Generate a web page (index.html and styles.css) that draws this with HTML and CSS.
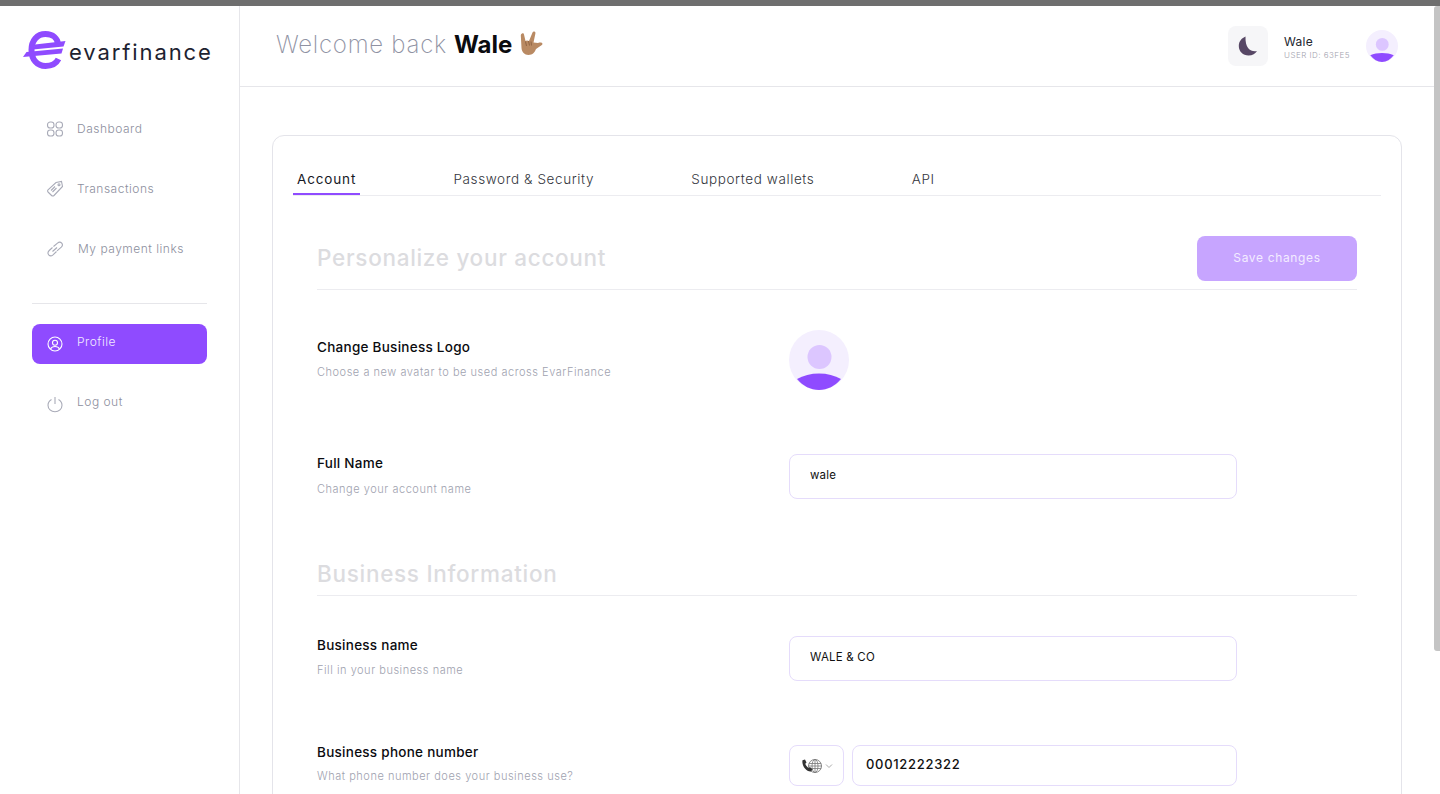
FILE: index.html
```html
<!DOCTYPE html>
<html lang="en">
<head>
    <meta charset="UTF-8">
    <meta name="viewport" content="width=device-width, initial-scale=1.0">
    <title>Profile - EvarFinance</title>
    <link rel="stylesheet" href="styles.css">
</head>
<body>

    <div class="top-strip"></div>
    <div class="scrollbar"></div>

    <div class="app">
        <aside class="sidebar">
            <div class="logo">
                <svg class="logo-mark" width="44" height="38" viewBox="0 0 44 38">
                    <path d="M35.500 28C33 33 28 35 22.500 35C14 35 8.500 28.500 8.500 19C8.500 9.500 14 3 22.500 3C30 3 34.500 7.500 35 13" fill="none" stroke="#8f4bff" stroke-width="6"/>
                    <path d="M12 13.500L42.500 10L40.500 15.500L10 18.500Z" fill="#8f4bff"/>
                    <path d="M3.500 21L40 17.500L38.500 22.500L0 26Z" fill="#8f4bff"/>
                </svg>
                <span class="logo-text">evarfinance</span>
            </div>

            <nav class="nav">
                <a class="nav-item">
                    <svg class="nav-icon" width="18" height="18" viewBox="0 0 18 18" fill="none" stroke="#a9abb8" stroke-width="1.100">
                        <rect x="1.500" y="2" width="6.500" height="6" rx="2.800"/>
                        <rect x="10" y="2" width="6.500" height="6" rx="2.800"/>
                        <rect x="1.500" y="10" width="6.500" height="6" rx="2.800"/>
                        <rect x="10" y="10" width="6.500" height="6" rx="2.800"/>
                    </svg>
                    <span>Dashboard</span>
                </a>
                <a class="nav-item">
                    <svg class="nav-icon" width="18" height="18" viewBox="0 0 18 18" fill="none" stroke="#a9abb8" stroke-width="1.100">
                        <path d="M10 2.500L15.500 1.500L16.500 6.500L8 15.500C7.300 16.200 6.300 16.200 5.600 15.500L2 12C1.400 11.300 1.400 10.400 2 9.800Z"/>
                        <circle cx="13" cy="4.700" r="1"/>
                        <path d="M5 10.500L9 6.500M6.500 12L10.500 8"/>
                    </svg>
                    <span>Transactions</span>
                </a>
                <a class="nav-item nav-links">
                    <svg class="nav-icon" width="18" height="18" viewBox="0 0 18 18" fill="none" stroke="#a9abb8" stroke-width="1.100">
                        <path d="M7.500 6.500L11.500 3.200C12.900 2 14.700 2.100 15.700 3.200C16.700 4.400 16.500 6 15.300 7.100L11 10.800"/>
                        <path d="M6.500 11.500L11 7.500"/>
                        <path d="M6.500 7.500L3.200 10.500C1.900 11.800 1.700 13.600 2.700 14.800C3.800 16 5.600 16 7 14.800L10.500 11.500"/>
                    </svg>
                    <span>My payment links</span>
                </a>
            </nav>

            <div class="nav-divider"></div>

            <nav class="nav nav-lower">
                <a class="nav-item active">
                    <svg class="nav-icon" width="18" height="18" viewBox="0 0 18 18" fill="none" stroke="#fff" stroke-width="1.100">
                        <circle cx="9" cy="9" r="7"/>
                        <circle cx="9" cy="7.800" r="2.500"/>
                        <path d="M4.500 14C5.500 12 7 11.500 9 11.500C11 11.500 12.500 12 13.500 14"/>
                    </svg>
                    <span>Profile</span>
                </a>
                <a class="nav-item">
                    <svg class="nav-icon" width="18" height="18" viewBox="0 0 18 18" fill="none" stroke="#a9abb8" stroke-width="1.100">
                        <path d="M5.500 4.500C3.400 5.700 2 7.800 2 10.200C2 13.900 5.100 16.800 9 16.800C12.900 16.800 16 13.900 16 10.200C16 7.800 14.600 5.700 12.500 4.500"/>
                        <path d="M9 2V9"/>
                    </svg>
                    <span>Log out</span>
                </a>
            </nav>
        </aside>

        <main class="main">
            <header class="header">
                <h1 class="welcome">
                    <span>Welcome back</span>
                    <strong>Wale</strong>
                    <svg class="wave" width="28" height="28" viewBox="0 0 28 28">
                        <path d="M6 3.500C7 3 7.800 3.500 8 4.500L9.500 11L11 10.500L13 11L16.500 2.500C17 1.500 18 1.300 18.800 1.800C19.500 2.200 19.600 3 19.300 4L17.500 12.500L22 13C23.500 12.500 25 12.300 26 13C26.800 13.700 26.500 14.800 25.500 15.300L20 19C19 22 16.500 25 12.500 25C8.500 25 5.800 22 5.500 18L4.800 5.200C4.800 4.400 5.200 3.800 6 3.500Z" fill="#b98a63"/>
                        <path d="M9.500 11.500L10.500 16M12.500 11L13.500 15.500M15 11.500L15.500 15.500" stroke="#8f6444" stroke-width="1" fill="none"/>
                    </svg>
                </h1>
                <div class="header-right">
                    <button class="theme-btn">
                        <svg width="20" height="20" viewBox="0 0 20 20">
                            <path d="M7.500 0.500C4 2 0.800 5 0.800 10C0.800 15.500 5 19.500 10.500 19.500C14.500 19.500 17.500 17.500 19 15C13 16 7 13 7.500 0.500Z" fill="#574765"/>
                        </svg>
                    </button>
                    <div class="user-info">
                        <div class="user-name">Wale</div>
                        <div class="user-id">USER ID: 63FE5</div>
                    </div>
                    <svg class="avatar" width="32" height="32" viewBox="0 0 60 60">
                        <circle cx="30" cy="30" r="30" fill="#f4effe"/>
                        <circle cx="30.500" cy="27" r="12" fill="#dcc6ff"/>
                        <path d="M8 47.500C20 41.500 40 41.500 52 47.500C46 55.500 38.500 60 30 60C21.500 60 14 55.500 8 47.500Z" fill="#8f4bff"/>
                    </svg>
                </div>
            </header>

            <div class="content">
                <section class="card">
                    <div class="tabs">
                        <a class="tab active">Account</a>
                        <a class="tab">Password &amp; Security</a>
                        <a class="tab">Supported wallets</a>
                        <a class="tab">API</a>
                    </div>

                    <div class="form-area">
                        <div class="section-head">
                            <h2>Personalize your account</h2>
                            <button class="save-btn">Save changes</button>
                        </div>

                        <div class="row row-logo">
                            <div class="row-label">
                                <h3>Change Business Logo</h3>
                                <p>Choose a new avatar to be used across EvarFinance</p>
                            </div>
                            <svg class="big-avatar" width="60" height="60" viewBox="0 0 60 60">
                                <circle cx="30" cy="30" r="30" fill="#f4effe"/>
                                <circle cx="30.500" cy="27" r="12" fill="#dcc6ff"/>
                                <path d="M8 49C20 41.500 40 41.500 52 49C46 56 38.500 60 30 60C21.500 60 14 56 8 49Z" fill="#8f4bff"/>
                            </svg>
                        </div>

                        <div class="row row-name">
                            <div class="row-label">
                                <h3>Full Name</h3>
                                <p>Change your account name</p>
                            </div>
                            <input class="text-input" type="text" value="wale">
                        </div>

                        <div class="section-head section-business">
                            <h2>Business Information</h2>
                        </div>

                        <div class="row row-business">
                            <div class="row-label">
                                <h3>Business name</h3>
                                <p>Fill in your business name</p>
                            </div>
                            <input class="text-input" type="text" value="WALE &amp; CO">
                        </div>

                        <div class="row row-phone">
                            <div class="row-label">
                                <h3>Business phone number</h3>
                                <p>What phone number does your business use?</p>
                            </div>
                            <div class="phone-group">
                                <div class="phone-select">
                                    <svg width="22" height="16" viewBox="0 0 22 16" fill="none">
                                        <circle cx="14" cy="8" r="6.500" stroke="#777" stroke-width="0.900"/>
                                        <ellipse cx="14" cy="8" rx="3" ry="6.500" stroke="#777" stroke-width="0.800"/>
                                        <path d="M8 5.500H20M7.500 8H20.500M8 10.500H20M14 1.500V14.500" stroke="#777" stroke-width="0.800"/>
                                        <path d="M1.500 2.200L4 1.500L5.500 4.500L4.300 5.800C4.800 7.500 6 9 7.500 10L9 9L11.500 11.500L10 13.500C5.500 14 0.500 8 1.500 2.200Z" fill="#333"/>
                                    </svg>
                                    <svg width="8" height="6" viewBox="0 0 8 6" fill="none">
                                        <path d="M1 1.500L4 4.500L7 1.500" stroke="#aaa" stroke-width="1"/>
                                    </svg>
                                </div>
                                <input class="text-input phone-input" type="text" value="00012222322">
                            </div>
                        </div>
                    </div>
                </section>
            </div>
        </main>
    </div>

</body>
</html>
```

FILE: styles.css
```css
* {
    box-sizing: border-box;
}

html, body {
    height: 794px;
    margin: 0;
    overflow: hidden;
}

body {
    font-family: "Inter", "Open Sans", sans-serif;
    background-color: white;
    color: #111;
}

.top-strip {
    height: 6px;
    background-color: #6e6e6e;
}

.scrollbar {
    position: absolute;
    top: 6px;
    right: 0;
    width: 6px;
    height: 645px;
    background-color: #c4c4c4;
    border-radius: 3px 0 0 3px;
}

.app {
    display: flex;
    height: 788px;
}

/* sidebar */
.sidebar {
    width: 240px;
    flex-shrink: 0;
    border-right: 1px solid #e6e6ea;
    padding: 0 32px;
}

.logo {
    display: flex;
    align-items: center;
    gap: 2px;
    height: 88px;
    margin-left: -9px;
}

.logo-mark {
    flex-shrink: 0;
}

.logo-text {
    margin-top: 3px;
    font-size: 22px;
    font-weight: 400;
    letter-spacing: 1.900px;
    color: #1d2230;
    white-space: nowrap;
}

.nav {
    padding-top: 15px;
}

.nav-item {
    display: flex;
    align-items: center;
    height: 40px;
    padding: 0 14px;
    border-radius: 8px;
    gap: 13px;
    font-size: 12px;
    font-weight: 300;
    letter-spacing: 0.500px;
    color: #8d8f9e;
    margin-bottom: 20px;
}

.nav-item span {
    margin-bottom: 2px;
}

.nav-links {
    gap: 14px;
}

.nav-icon {
    flex-shrink: 0;
}

.nav-item.active {
    background-color: #8f4bff;
    color: #f2eaff;
}

/* collapses with the 20px under the last nav item */
.nav-divider {
    margin-top: 34px;
    border-top: 1px solid #e6e6ea;
}

.nav-lower {
    padding-top: 20px;
}

.nav-lower .nav-item span {
    margin-bottom: 6px;
}

/* main */
.main {
    flex: 1;
    min-width: 0;
}

.header {
    display: flex;
    align-items: center;
    justify-content: space-between;
    height: 81px;
    padding: 0 42px 0 36px;
    border-bottom: 1px solid #e6e6ea;
}

.welcome {
    display: flex;
    align-items: center;
    gap: 7px;
    margin: 0 0 4px;
    font-size: 24px;
    font-weight: 200;
    letter-spacing: 0.750px;
    color: #8f92a3;
}

.welcome strong {
    font-weight: 700;
    color: #0b0b0f;
    letter-spacing: 0;
}

.wave {
    margin-left: -3px;
}

.header-right {
    display: flex;
    align-items: center;
}

.theme-btn {
    display: flex;
    align-items: center;
    justify-content: center;
    width: 40px;
    height: 40px;
    border: none;
    border-radius: 8px;
    background-color: #f6f6f8;
    padding: 0;
}

.user-info {
    margin-left: 16px;
    margin-right: 16px;
    padding-top: 3px;
}

.user-name {
    font-size: 12px;
    font-weight: 400;
    letter-spacing: 0.300px;
    color: #22252e;
    line-height: 15px;
}

.user-id {
    font-size: 8px;
    font-weight: 300;
    letter-spacing: 0.480px;
    color: #9fa1ae;
    line-height: 13px;
}

.avatar {
    display: block;
}

.content {
    padding: 48px 38px 0 32px;
}

.card {
    border: 1px solid #e4e4ea;
    border-radius: 12px;
    height: 800px;
    padding: 22px 20px 0 20px;
}

.tabs {
    display: flex;
    border-bottom: 1px solid #ececf0;
    height: 38px;
}

.tab {
    height: 37px;
    padding: 0 4px;
    line-height: 42px;
    font-size: 13.500px;
    font-weight: 300;
    letter-spacing: 0.600px;
    color: #33353c;
    margin-right: 89.300px;
    white-space: nowrap;
}

.tab.active {
    color: #16181f;
    border-bottom: 2px solid #8f4bff;
    font-weight: 400;
    letter-spacing: 0.850px;
}

.form-area {
    padding: 40px 24px 0 24px;
}

.section-head {
    display: flex;
    align-items: center;
    justify-content: space-between;
    height: 54px;
    padding-bottom: 9px;
    border-bottom: 1px solid #ececf0;
}

.section-head h2 {
    margin: 0 0 2px;
    font-size: 22.500px;
    font-weight: 500;
    letter-spacing: 0.700px;
    color: #dcdcdf;
}

.save-btn {
    width: 160px;
    height: 45px;
    border: none;
    border-radius: 8px;
    background-color: #c7a5ff;
    color: #f3ecff;
    font-family: inherit;
    font-size: 12px;
    font-weight: 400;
    letter-spacing: 0.650px;
    padding-bottom: 3px;
}

.row {
    display: flex;
    align-items: flex-start;
}

.row-label {
    width: 472px;
    flex-shrink: 0;
}

.row-label h3 {
    margin: 0;
    font-size: 13.500px;
    font-weight: 500;
    letter-spacing: 0.270px;
    color: #0b0b0f;
    line-height: 18px;
}

.row-label p {
    margin: 9px 0 0;
    font-size: 11px;
    font-weight: 300;
    letter-spacing: 0.530px;
    color: #a0a2af;
    line-height: 15px;
}

.row-logo {
    padding-top: 40px;
}

.row-logo .row-label {
    padding-top: 8px;
}

.row-name {
    padding-top: 64px;
}

.row-name .row-label p {
    margin-top: 10px;
}

.text-input {
    width: 448px;
    height: 45px;
    padding: 0 20px 3px;
    border: 1px solid #e5dcfb;
    border-radius: 8px;
    font-family: inherit;
    font-size: 11.500px;
    letter-spacing: 0.200px;
    color: #111;
    outline: none;
}

.section-business {
    margin-top: 48px;
    height: 49px;
    padding-top: 6px;
    padding-bottom: 0;
}

.row-business {
    padding-top: 40px;
}

.row-phone {
    padding-top: 62px;
}

.row-phone .row-label p {
    margin-top: 8px;
}

.phone-group {
    display: flex;
    gap: 8px;
    width: 448px;
    margin-top: 2px;
}

.phone-select {
    display: flex;
    align-items: center;
    justify-content: center;
    gap: 2px;
    width: 55px;
    height: 41px;
    border: 1px solid #e5dcfb;
    border-radius: 8px;
    flex-shrink: 0;
}

.phone-input {
    flex: 1;
    min-width: 0;
    height: 41px;
    padding: 0 13px 4px;
    font-size: 13px;
    font-weight: 500;
    letter-spacing: 0.700px;
}
```
